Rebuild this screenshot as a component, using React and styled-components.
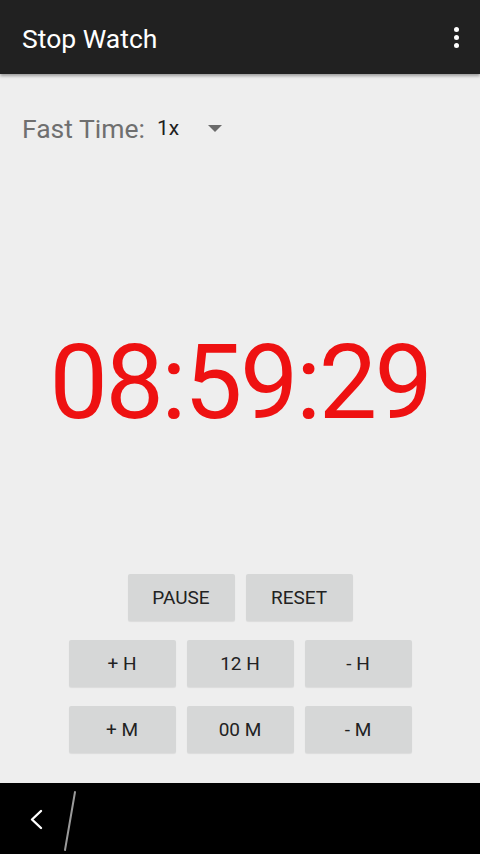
import React, { useState } from "react";
import styled, { createGlobalStyle } from "styled-components";

const GlobalStyle = createGlobalStyle`
  html, body {
    margin: 0;
    padding: 0;
    background: #eeeeee;
    font-family: Roboto, "Noto Sans", sans-serif;
  }
`;

const Screen = styled.div`
  width: 480px;
  height: 854px;
  display: flex;
  flex-direction: column;
  background: #eeeeee;
  overflow: hidden;
`;

const ActionBar = styled.div`
  height: 74px;
  flex-shrink: 0;
  background: #212121;
  display: flex;
  align-items: center;
  justify-content: space-between;
  padding: 0 14px 0 22px;
  box-shadow: 0 2px 3px rgba(0, 0, 0, 0.35);
  position: relative;
  z-index: 1;
`;

const Title = styled.div`
  color: #ffffff;
  font-size: 26.5px;
  margin-top: 2px;
`;

const OverflowButton = styled.div`
  width: 20px;
  display: flex;
  flex-direction: column;
  align-items: center;
  gap: 3px;
`;

const Dot = styled.span`
  width: 5px;
  height: 5px;
  border-radius: 50%;
  background: #ffffff;
`;

const Content = styled.div`
  flex: 1;
  display: flex;
  flex-direction: column;
  align-items: center;
  padding: 0 0 30px;
`;

const FastRow = styled.div`
  align-self: stretch;
  display: flex;
  align-items: center;
  padding: 0 22px;
  margin-top: 39px;
  height: 30px;
`;

const FastLabel = styled.span`
  font-size: 26.5px;
  color: #6f6f6f;
`;

const Spinner = styled.div`
  display: flex;
  align-items: center;
  margin-left: 12px;
`;

const SpinnerValue = styled.span`
  font-size: 21px;
  color: #1e1e1e;
  width: 51px;
`;

const Caret = styled.span`
  width: 0;
  height: 0;
  border-left: 7px solid transparent;
  border-right: 7px solid transparent;
  border-top: 7px solid #6a6a6a;
`;

const Clock = styled.div`
  margin-top: 180px;
  font-size: 104px;
  line-height: 120px;
  color: #ee1111;
  letter-spacing: -2.5px;
`;

const Buttons = styled.div`
  margin-top: auto;
  display: flex;
  flex-direction: column;
  align-items: center;
  gap: 19px;
`;

const ButtonRow = styled.div`
  display: flex;
  gap: 11px;
`;

const Button = styled.button`
  width: 107px;
  height: 47px;
  border: none;
  border-radius: 2px;
  background: #d6d7d7;
  color: #222222;
  font-family: Roboto, sans-serif;
  font-size: 19px;
  padding: 0;
  box-shadow: 0 1px 1px rgba(0, 0, 0, 0.08);
  cursor: pointer;
`;

const NavBar = styled.div`
  height: 71px;
  flex-shrink: 0;
  background: #000000;
  display: flex;
  align-items: center;
  padding-left: 22px;
`;

const pad = (n) => String(n).padStart(2, "0");

export default function App() {
  const [seconds] = useState(8 * 3600 + 59 * 60 + 29);
  const h = Math.floor(seconds / 3600);
  const m = Math.floor((seconds % 3600) / 60);
  const s = seconds % 60;

  return (
    <Screen>
      <GlobalStyle />
      <ActionBar>
        <Title>Stop Watch</Title>
        <OverflowButton>
          <Dot />
          <Dot />
          <Dot />
        </OverflowButton>
      </ActionBar>

      <Content>
        <FastRow>
          <FastLabel>Fast Time:</FastLabel>
          <Spinner>
            <SpinnerValue>1x</SpinnerValue>
            <Caret />
          </Spinner>
        </FastRow>

        <Clock>
          {pad(h)}:{pad(m)}:{pad(s)}
        </Clock>

        <Buttons>
          <ButtonRow>
            <Button>PAUSE</Button>
            <Button>RESET</Button>
          </ButtonRow>
          <ButtonRow>
            <Button>+ H</Button>
            <Button>12 H</Button>
            <Button>- H</Button>
          </ButtonRow>
          <ButtonRow>
            <Button>+ M</Button>
            <Button>00 M</Button>
            <Button>- M</Button>
          </ButtonRow>
        </Buttons>
      </Content>

      <NavBar>
        <svg width="60" height="66" viewBox="0 0 60 66">
          <path d="M19 25 L10 33.5 L19 42" stroke="#ffffff" strokeWidth="2.4" fill="none" strokeLinecap="round" strokeLinejoin="round" />
          <path d="M53 6 L43 64" stroke="#9a9a9a" strokeWidth="2" strokeLinecap="round" />
        </svg>
      </NavBar>
    </Screen>
  );
}
